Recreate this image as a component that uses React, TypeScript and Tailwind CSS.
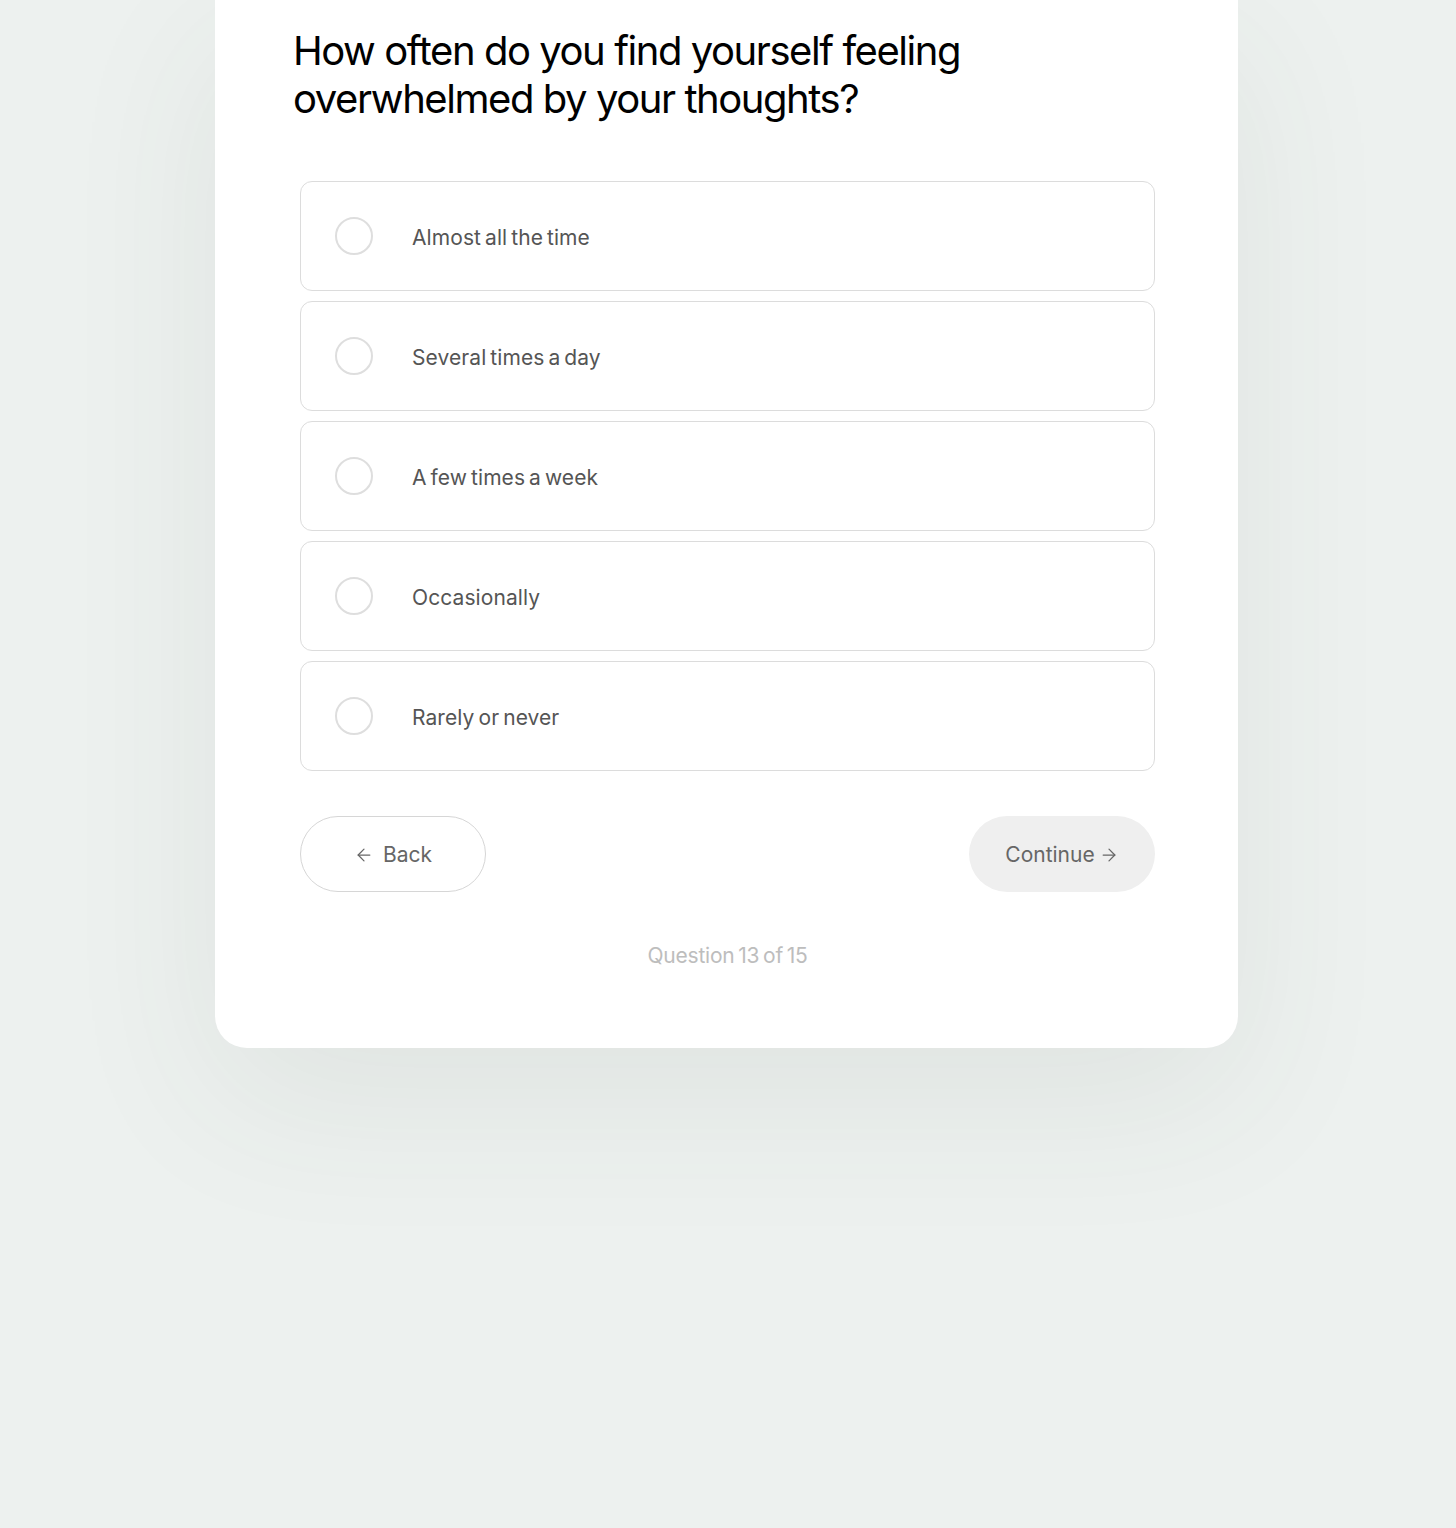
import { ArrowLeft, ArrowRight } from 'lucide-react'

const options = [
  'Almost all the time',
  'Several times a day',
  'A few times a week',
  'Occasionally',
  'Rarely or never',
]

export default function App() {
  return (
    <div
      className="min-h-[1528px] w-full bg-[#edf1ef] flex justify-center"
      style={{ fontFamily: 'Inter, "Noto Sans", sans-serif' }}
    >
      <div className="w-[1023px] ml-[-3px] h-fit bg-white rounded-b-[32px] pt-[27px] pb-[78px] pl-[78px] pr-[83px] shadow-[0_50px_160px_rgba(60,80,70,0.08)]">
        {/* Question */}
        <h1 className="text-[40px] leading-[48px] tracking-[-0.036em] text-black font-normal">
          How often do you find yourself feeling
          <br />
          overwhelmed by your thoughts?
        </h1>

        {/* Options */}
        <div className="pl-[7px] mt-[58px] flex flex-col gap-[10px]">
          {options.map((label) => (
            <button
              key={label}
              className="h-[110px] w-full flex items-center border border-[#dcdcdc] rounded-[12px] bg-white text-left"
            >
              <span className="ml-[34px] w-[38px] h-[38px] rounded-full border-2 border-[#dedede]" />
              <span className="ml-[39px] pt-[3px] text-[21px] tracking-[0.004em] [word-spacing:-2px] text-[#555555]">
                {label}
              </span>
            </button>
          ))}
        </div>

        {/* Navigation */}
        <div className="pl-[7px] mt-[45px] flex items-center justify-between">
          <button className="w-[186px] h-[76px] rounded-full border border-[#d6d6d6] bg-white flex items-center justify-center gap-[9px] pt-[2px] text-[21px] text-[#666666]">
            <ArrowLeft className="w-[20px] h-[20px]" strokeWidth={1.5} />
            Back
          </button>
          <button className="w-[186px] h-[76px] rounded-full bg-[#efefef] flex items-center justify-center gap-[4px] pt-[2px] text-[21px] text-[#666666]">
            Continue
            <ArrowRight className="w-[20px] h-[20px]" strokeWidth={1.5} />
          </button>
        </div>

        <p className="pl-[7px] mt-[50px] text-center text-[21px] leading-[28px] tracking-[-0.01em] [word-spacing:-2px] text-[#bdbdbd]">
          Question 13 of 15
        </p>
      </div>
    </div>
  )
}
